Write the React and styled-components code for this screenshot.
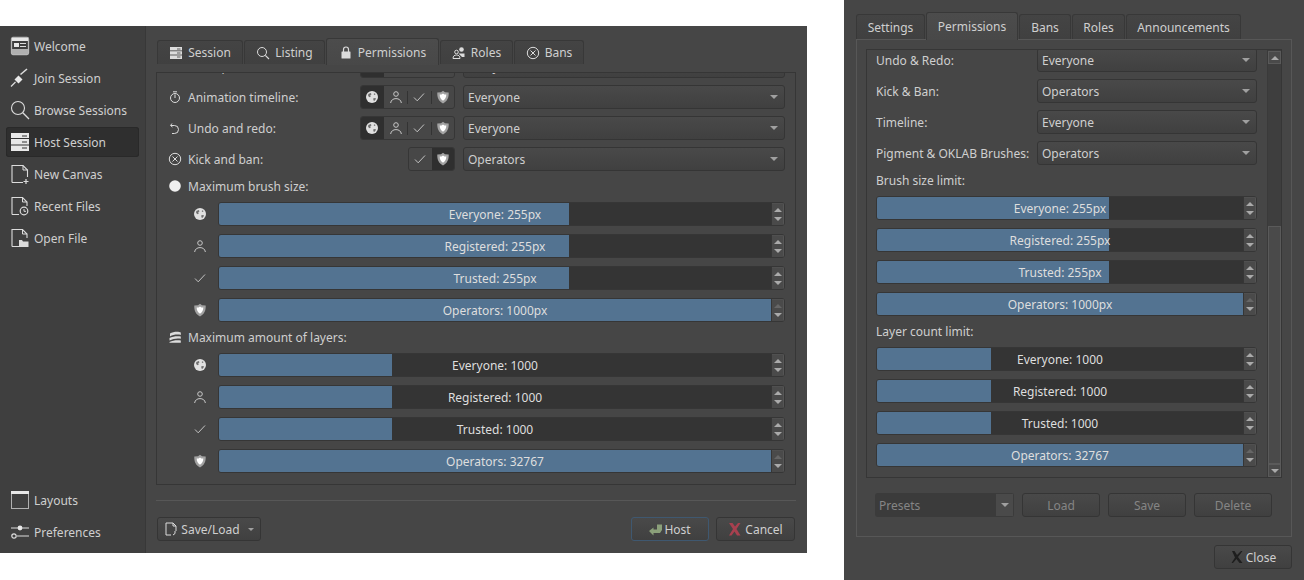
import React from "react";
import styled, { createGlobalStyle, css } from "styled-components";

const Global = createGlobalStyle`
  html, body { margin: 0; padding: 0; background: #fff; }
  #root { width: 1304px; height: 580px; overflow: hidden; }
  * { box-sizing: border-box; }
`;

const Page = styled.div`
  display: flex;
  width: 1304px;
  height: 580px;
  font-family: "Noto Sans", sans-serif;
  font-size: 12px;
  color: #cfcfcf;
  background: #fff;
`;
const LeftWindow = styled.div`
  display: flex;
  width: 807px;
  height: 527px;
  margin-top: 26px;
  background: #464646;
`;
const RightWindow = styled.div`
  display: flex;
  flex-direction: column;
  width: 460px;
  height: 580px;
  margin-left: 37px;
  padding: 12px 12px 0;
  background: #464646;
`;
const Sidebar = styled.nav`
  display: flex;
  flex-direction: column;
  gap: 2px;
  width: 146px;
  padding: 5px 6px 6px;
  background: #3f3f3f;
  border-right: 1px solid #383838;
`;
const Spacer = styled.div`
  flex: 1;
`;
const NavItem = styled.div`
  display: flex;
  align-items: center;
  gap: 4px;
  height: 30px;
  padding-left: 4px;
  border-radius: 3px;
  ${(p) =>
    p.$active &&
    css`
      background: #2f2f2f;
      box-shadow: inset 0 0 0 1px #292929;
    `}
`;
const NavIcon = styled.svg`
  width: 20px;
  height: 20px;
  flex: none;
`;
const Main = styled.main`
  display: flex;
  flex-direction: column;
  flex: 1;
  padding: 12px 11px 0 10px;
`;
const TabBar = styled.div`
  display: flex;
  align-items: flex-end;
  gap: 1px;
  height: ${(p) => p.$h}px;
  padding-left: ${(p) => p.$left}px;
  flex: none;
`;
const Tab = styled.div`
  display: flex;
  align-items: center;
  justify-content: center;
  gap: 5px;
  width: ${(p) => p.$w}px;
  height: ${(p) => (p.$active ? p.$h + 1 : p.$h - 2)}px;
  border: 1px solid #383838;
  border-bottom: 0;
  border-radius: 3px 3px 0 0;
  background: ${(p) =>
    p.$active ? "linear-gradient(#4c4c4c, #484848)" : "linear-gradient(#444444, #404040)"};
  position: relative;
  z-index: ${(p) => (p.$active ? 1 : 0)};
  margin-bottom: ${(p) => (p.$active ? -1 : 0)}px;
`;
const TabIcon = styled.svg`
  width: 14px;
  height: 14px;
  flex: none;
`;
const Pane = styled.section`
  display: flex;
  flex-direction: column;
  height: 421px;
  padding-top: 8px;
`;
const PaneBody = styled.div`
  flex: 1;
  overflow: hidden;
  border: 1px solid #363636;
  padding: 0 10px 0 11px;
`;
const Offset = styled.div`
  margin-top: -19px;
`;
const PermRow = styled.div`
  display: flex;
  align-items: center;
  height: 24px;
  margin-bottom: 7px;
`;
const RowIcon = styled.svg`
  width: 14px;
  height: 14px;
  margin-right: 6px;
  flex: none;
`;
const RowLabel = styled.span`
  flex: 1;
  white-space: nowrap;
`;
const Group = styled.div`
  display: flex;
  align-items: center;
  width: ${(p) => p.$w}px;
  height: 24px;
  margin-right: 8px;
  flex: none;
  border: 1px solid #363636;
  border-radius: 3px;
  background: #474747;
  overflow: hidden;
`;
const GroupBtn = styled.div`
  display: flex;
  align-items: center;
  justify-content: center;
  flex: 1;
  height: 22px;
  background: ${(p) => (p.$on ? "#2f2f2f" : "transparent")};
`;
const GroupSep = styled.i`
  width: 1px;
  height: 13px;
  flex: none;
  background: ${(p) => (p.$hide ? "transparent" : "#333")};
`;
const GroupIcon = styled.svg`
  width: 14px;
  height: 14px;
`;
const Combo = styled.div`
  display: flex;
  align-items: center;
  justify-content: space-between;
  width: ${(p) => p.$w}px;
  height: 24px;
  padding: 0 6px 0 4px;
  flex: none;
  border: 1px solid #353535;
  border-radius: 3px;
  background: linear-gradient(#494949, #404040);
`;
const Caret = styled.i`
  width: 0;
  height: 0;
  border-left: 4px solid transparent;
  border-right: 4px solid transparent;
  border-top: 4px solid #a0a0a0;
`;
const SmallCaret = styled(Caret)`
  margin-left: 5px;
  border-left-width: 3.5px;
  border-right-width: 3.5px;
  border-top-width: 3.5px;
`;
const Heading = styled.div`
  display: flex;
  align-items: center;
  height: 20px;
  margin: ${(p) => p.$m} 0 6px;
`;
const SliderRow = styled.div`
  display: flex;
  align-items: center;
  height: 24px;
  margin-bottom: 8px;
`;
const SliderIconBox = styled.div`
  display: flex;
  width: ${(p) => p.$w}px;
  padding-left: 25px;
  flex: none;
`;
const Slider = styled.div`
  display: flex;
  flex: 1;
  height: 24px;
  border: 1px solid #363636;
  border-radius: 3px;
  overflow: hidden;
`;
const Track = styled.div`
  position: relative;
  flex: 1;
  background: #343434;
`;
const Fill = styled.div`
  height: 100%;
  background: #537391;
`;
const Value = styled.span`
  position: absolute;
  inset: 0;
  display: flex;
  align-items: center;
  justify-content: center;
  color: #dedede;
`;
const Spin = styled.div`
  display: flex;
  flex-direction: column;
  align-items: center;
  justify-content: center;
  gap: 5px;
  width: 13px;
  flex: none;
  background: #4a4a4a;
  border-left: 1px solid #363636;
  box-shadow: inset -1px 0 0 #555, inset 0 1px 0 #505050;
`;
const Up = styled.i`
  width: 0;
  height: 0;
  border-left: 4px solid transparent;
  border-right: 4px solid transparent;
  border-bottom: 4px solid ${(p) => (p.$dim ? "#666666" : "#aaaaaa")};
`;
const Down = styled.i`
  width: 0;
  height: 0;
  border-left: 4px solid transparent;
  border-right: 4px solid transparent;
  border-top: 4px solid #aaaaaa;
`;
const Divider = styled.hr`
  width: 100%;
  height: 1px;
  margin: 15px 0 16px;
  border: 0;
  background: #575757;
`;
const Footer = styled.div`
  display: flex;
  align-items: center;
  gap: 7px;
  padding: 0 1px;
`;
const Button = styled.div`
  display: flex;
  align-items: center;
  justify-content: center;
  gap: ${(p) => p.$gap ?? 3}px;
  width: ${(p) => p.$w}px;
  height: 24px;
  flex: none;
  border: 1px solid ${(p) => (p.$focus ? "#3f5870" : "#353535")};
  border-radius: 3px;
  background: linear-gradient(#494949, #404040);
  color: ${(p) => (p.$off ? "#858585" : "inherit")};
`;
const RightPane = styled.section`
  height: 498px;
  padding: 9px 9px 0 9px;
  border: 1px solid #575757;
`;
const ScrollArea = styled.div`
  display: flex;
  height: 429px;
  border: 1px solid #363636;
`;
const RightBody = styled.div`
  flex: 1;
  overflow: hidden;
  padding: 0 10px 0 9px;
`;
const RightOffset = styled.div`
  margin-top: -2px;
`;
const Scrollbar = styled.div`
  display: flex;
  flex-direction: column;
  width: 14px;
  padding-top: 1px;
  flex: none;
  background: #3e3e3e;
  border-left: 1px solid #3a3a3a;
`;
const ScrollBtn = styled.div`
  display: flex;
  align-items: center;
  justify-content: center;
  height: 13px;
  background: #4a4a4a;
  border: 1px solid #5a5a5a;
`;
const Thumb = styled.div`
  flex: 1;
  margin-top: 162px;
  background: #4a4a4a;
  border: 1px solid #5a5a5a;
`;
const RRow = styled.div`
  display: flex;
  align-items: center;
  height: 24px;
  margin-bottom: 7px;
`;
const RLabel = styled.span`
  width: 161px;
  flex: none;
  white-space: nowrap;
`;
const Presets = styled.div`
  display: flex;
  align-items: center;
  gap: 8px;
  margin-top: 15px;
  padding-left: 9px;
`;
const PresetBox = styled.div`
  display: flex;
  align-items: center;
  justify-content: space-between;
  width: 139px;
  height: 24px;
  border-radius: 3px;
  overflow: hidden;
  color: #858585;
  background: #3b3b3b;
  padding-left: 4px;
`;
const PresetArrow = styled.div`
  display: flex;
  align-items: center;
  justify-content: center;
  width: 19px;
  height: 100%;
  background: #4a4a4a;
  border: 1px solid #3b3b3b;
`;
const CloseRow = styled.div`
  display: flex;
  justify-content: flex-end;
  margin-top: 8px;
`;

const c = "#dcdcdc";
const Globe = () => (
  <>
    <circle cx="7" cy="7" r="6" fill="#e0e0e0" />
    <path d="M3.300 4l2.400-1 .8 1.200-1.300 1.300.6 1-1.200.8-1.500-1.300zM8.300 8.300l2.200-.4.400 1.100-1.600 2-.9-.8zM9 3.200l1.600.7-.8 1.200-1-.7z" fill="#6e6e6e" />
  </>
);
const Person = () => (
  <>
    <circle cx="7" cy="4" r="2.300" fill="none" stroke="#c8c8c8" strokeWidth="1" />
    <path d="M1.600 13c.5-3 2.600-4.400 5.400-4.400s4.900 1.400 5.400 4.400" fill="none" stroke="#c8c8c8" strokeWidth="1" />
  </>
);
const Check = () => <path d="M2 7.500l3.200 3.300L12 3.500" fill="none" stroke="#c4c4c4" strokeWidth="1" />;
const Shield = () => (
  <>
    <path d="M7 .8l2 1.400 3.700.2c.3 5.100-1.500 8.800-5.700 11C2.800 11.200 1 7.500 1.300 2.400L5 2.200z" fill="#a2a2a2" />
    <path d="M7 3.600l1.400.9 1.900.1c0 2.700-.9 4.600-3.300 6.100-2.400-1.500-3.300-3.400-3.300-6.100l1.900-.1z" fill="#fff" />
  </>
);
const levels = { g: Globe, p: Person, c: Check, s: Shield };

const PermIcon = ({ k }) => {
  const I = levels[k];
  return (
    <GroupIcon viewBox="0 0 14 14">
      <I />
    </GroupIcon>
  );
};

const sline = { fill: "none", stroke: c, strokeWidth: 1 };

const NavGlyphs = {
  welcome: (
    <>
      <rect x="1.500" y="1.500" width="17" height="17" rx="1.500" {...sline} strokeWidth="1.300" stroke="#b8b8b8" />
      <rect x="2" y="2" width="16" height="3" fill="#e8e8e8" />
      <rect x="4" y="7" width="5" height="4" fill="#e8e8e8" />
      <path d="M10 7.500h6M10 10.500h6" {...sline} />
      <rect x="2" y="13" width="16" height="5" fill="#b0b0b0" />
    </>
  ),
  join: (
    <>
      <path d="M1 18.500l4.500-4.500" {...sline} strokeWidth="1.200" />
      <path d="M4.500 11.500l4-4 4 4-4 4z" fill="#e8e8e8" />
      <path d="M10.500 6.500L17 1" {...sline} strokeWidth="1.600" />
    </>
  ),
  browse: (
    <>
      <circle cx="8" cy="8" r="6.500" {...sline} strokeWidth="1.100" />
      <path d="M12.800 12.800L19 19" {...sline} strokeWidth="1.300" />
    </>
  ),
  host: (
    <>
      <rect x="1" y="1" width="18" height="18" fill="#e8e8e8" />
      <path d="M1 6.500h18M1 13h18M12 4h5M12 10h5M12 16h5" stroke="#333" strokeWidth="1" />
    </>
  ),
  canvas: (
    <>
      <path d="M2 18.500V1.500h11l4.500 4.500v7M2 18.500h11" {...sline} strokeWidth="1.100" />
      <path d="M13 1.500V6h4.500" {...sline} />
      <path d="M16 15v5M13.500 17.500h5" {...sline} strokeWidth="1.200" />
    </>
  ),
  recent: (
    <>
      <path d="M2 18.500V1.500h10.500L17 6v4M2 18.500h7" {...sline} strokeWidth="1.100" />
      <path d="M12.500 1.500V6H17" {...sline} />
      <circle cx="14" cy="15" r="3.800" {...sline} strokeWidth="1.200" />
      <path d="M14 13v2.300h2" {...sline} />
    </>
  ),
  open: (
    <>
      <path d="M2 18.500V1.500h10.500L17 6v4M2 18.500h7" {...sline} strokeWidth="1.100" />
      <path d="M12.500 1.500V6H17" {...sline} />
      <path d="M9 12h3l1 1.500h5.500V19H9z" fill={c} />
    </>
  ),
  layouts: (
    <>
      <rect x="1.500" y="1.500" width="17" height="17" fill="none" stroke="#b0b0b0" strokeWidth="1" />
      <rect x="1" y="1" width="18" height="3" fill="#e8e8e8" />
    </>
  ),
  prefs: (
    <>
      <path d="M1 6h18M7 14h12" {...sline} />
      <circle cx="10" cy="6" r="2.400" fill="#e8e8e8" />
      <circle cx="4" cy="14" r="2.200" {...sline} strokeWidth="1.200" />
    </>
  ),
};

const tabGlyphs = {
  session: (
    <>
      <rect x="1" y="1" width="12" height="12" fill={c} />
      <path d="M1 4.800h12M1 9h12M8 3h3.500M8 7h3.500M8 11h3.500" stroke="#3d3d3d" strokeWidth="0.800" />
    </>
  ),
  listing: (
    <>
      <circle cx="6" cy="6" r="4.500" {...sline} />
      <path d="M9.300 9.300L13 13" {...sline} strokeWidth="1.100" />
    </>
  ),
  lock: (
    <>
      <path d="M4.500 7V4.500a2.500 2.500 0 0 1 5 0V7" {...sline} strokeWidth="1.200" />
      <rect x="2.500" y="6.500" width="9" height="7" rx="0.500" fill={c} />
    </>
  ),
  roles: (
    <>
      <circle cx="9.500" cy="3.500" r="2.300" fill={c} />
      <path d="M6.500 7.500h6v3.500h-2.500" fill={c} />
      <circle cx="4.500" cy="6" r="1.800" {...sline} />
      <path d="M1 12.500c0-2.500 1.500-3.500 3.500-3.500s3.500 1 3.500 3.500z" {...sline} />
    </>
  ),
  bans: (
    <>
      <circle cx="7" cy="7" r="5.700" {...sline} />
      <path d="M4.500 4.500l5 5M9.500 4.500l-5 5" {...sline} />
    </>
  ),
};

const rowGlyphs = {
  laser: null,
  timer: (
    <>
      <circle cx="7" cy="8" r="4.500" {...sline} />
      <path d="M5 1.800h4M7 4.500V8" {...sline} />
    </>
  ),
  undo: (
    <>
      <path d="M4 2.500L2.500 4.500l2 1.500" {...sline} />
      <path d="M3 4.500h3.500a4 4 0 0 1 0 8H4" {...sline} />
    </>
  ),
  ban: tabGlyphs.bans,
  dot: <circle cx="7" cy="7" r="5.800" fill="#f0f0f0" />,
  layers: (
    <>
      <path d="M2 3.500C5 1.500 11 1.500 12.800 2.500V5C10 4 5 4.500 2 6.500z" fill={c} />
      <path d="M1.500 8C5 6 10 6 12.800 6.500v2.300C10 8 5 8.500 1.500 10.500z" fill={c} />
      <path d="M1.500 12C5 10 10 10 12.800 10.500v2.300H1.500z" fill={c} />
    </>
  ),
};

const navTop = [
  ["welcome", "Welcome"],
  ["join", "Join Session"],
  ["browse", "Browse Sessions"],
  ["host", "Host Session", true],
  ["canvas", "New Canvas"],
  ["recent", "Recent Files"],
  ["open", "Open File"],
];
const navBottom = [
  ["layouts", "Layouts"],
  ["prefs", "Preferences"],
];

const Nav = ({ icon, label, active }) => (
  <NavItem $active={active}>
    <NavIcon viewBox="0 0 20 20">{NavGlyphs[icon]}</NavIcon>
    {label}
  </NavItem>
);

const RangeSlider = ({ label, pct, full, iconKey }) => (
  <SliderRow>
    {iconKey && (
      <SliderIconBox $w={50}>
        <PermIcon k={iconKey} />
      </SliderIconBox>
    )}
    <Slider>
      <Track>
        <Fill style={{ width: `${pct}%` }} />
        <Value>{label}</Value>
      </Track>
      <Spin>
        <Up $dim={full} />
        <Down />
      </Spin>
    </Slider>
  </SliderRow>
);

const perms = [
  ["laser", "Laser pointer:", ["g", "p", "c", "s"], "g", "Everyone"],
  ["timer", "Animation timeline:", ["g", "p", "c", "s"], "g", "Everyone"],
  ["undo", "Undo and redo:", ["g", "p", "c", "s"], "g", "Everyone"],
  ["ban", "Kick and ban:", ["c", "s"], "s", "Operators"],
];

const brush = [
  ["g", "Everyone: 255px", 63.4],
  ["p", "Registered: 255px", 63.4],
  ["c", "Trusted: 255px", 63.4],
  ["s", "Operators: 1000px", 100, true],
];
const layers = [
  ["g", "Everyone: 1000", 31.3],
  ["p", "Registered: 1000", 31.3],
  ["c", "Trusted: 1000", 31.3],
  ["s", "Operators: 32767", 100, true],
];

const rightCombos = [
  ["Undo & Redo:", "Everyone"],
  ["Kick & Ban:", "Operators"],
  ["Timeline:", "Everyone"],
  ["Pigment & OKLAB Brushes:", "Operators"],
];
const rBrush = [
  ["Everyone: 255px", 63.4],
  ["Registered: 255px", 63.4],
  ["Trusted: 255px", 63.4],
  ["Operators: 1000px", 100, true],
];
const rLayers = [
  ["Everyone: 1000", 31.2],
  ["Registered: 1000", 31.2],
  ["Trusted: 1000", 31.2],
  ["Operators: 32767", 100, true],
];

const HostGlyph = () => (
  <TabIcon viewBox="0 0 14 14">
    <path d="M0 9l4.500-3.500v2h3.500V2.500h5V8l-2 3H4.500v2.500z" fill="#8ba07a" />
  </TabIcon>
);
const CancelGlyph = () => (
  <TabIcon viewBox="0 0 14 14">
    <path d="M1 1h3.500l2.500 3.500L10 1h2.500L8.500 7l4 6.500H9L6.500 9.500 3.500 13.500H1l4-6.500z" fill="#a8404f" />
  </TabIcon>
);
const CloseGlyph = () => (
  <TabIcon viewBox="0 0 14 14">
    <path d="M2 1h2.500l2.500 4L11 1h1.500L8 7l4.500 6h-3L6.500 9 3 13H1.500L5 7.500z" fill="#1e1e1e" />
  </TabIcon>
);
const SaveGlyph = () => (
  <TabIcon viewBox="0 0 14 14">
    <path d="M2 13V1h7l3 3v5M2 13h5M9 1v3h3" {...sline} />
    <path d="M9 13l2-1.500V9" {...sline} />
  </TabIcon>
);

const PermGroup = ({ btns, on }) => (
  <Group $w={btns.length === 4 ? 95 : 47}>
    {btns.map((b, i) => (
      <React.Fragment key={b}>
        {i > 0 && <GroupSep $hide={b === on || btns[i - 1] === on} />}
        <GroupBtn $on={b === on}>
          <PermIcon k={b} />
        </GroupBtn>
      </React.Fragment>
    ))}
  </Group>
);

export default function App() {
  return (
    <Page>
      <Global />
      <LeftWindow>
        <Sidebar>
          {navTop.map(([i, l, a]) => (
            <Nav key={l} icon={i} label={l} active={a} />
          ))}
          <Spacer />
          {navBottom.map(([i, l]) => (
            <Nav key={l} icon={i} label={l} />
          ))}
        </Sidebar>
        <Main>
          <TabBar $h={26} $left={1}>
            <Tab $h={26} $w={86}>
              <TabIcon viewBox="0 0 14 14">{tabGlyphs.session}</TabIcon>Session
            </Tab>
            <Tab $h={26} $w={81}>
              <TabIcon viewBox="0 0 14 14">{tabGlyphs.listing}</TabIcon>Listing
            </Tab>
            <Tab $h={26} $w={113} $active>
              <TabIcon viewBox="0 0 14 14">{tabGlyphs.lock}</TabIcon>Permissions
            </Tab>
            <Tab $h={26} $w={73}>
              <TabIcon viewBox="0 0 14 14">{tabGlyphs.roles}</TabIcon>Roles
            </Tab>
            <Tab $h={26} $w={70}>
              <TabIcon viewBox="0 0 14 14">{tabGlyphs.bans}</TabIcon>Bans
            </Tab>
          </TabBar>
          <Pane>
            <PaneBody>
              <Offset>
                {perms.map(([ic, label, btns, on, val]) => (
                  <PermRow key={label}>
                    <RowIcon viewBox="0 0 14 14">{rowGlyphs[ic]}</RowIcon>
                    <RowLabel>{label}</RowLabel>
                    <PermGroup btns={btns} on={on} />
                    <Combo $w={322}>
                      {val}
                      <Caret />
                    </Combo>
                  </PermRow>
                ))}
                <Heading $m="-2px">
                  <RowIcon viewBox="0 0 14 14">{rowGlyphs.dot}</RowIcon>
                  Maximum brush size:
                </Heading>
                {brush.map(([k, l, p, f]) => (
                  <RangeSlider key={l} label={l} pct={p} full={f} iconKey={k} />
                ))}
                <Heading $m="-3px">
                  <RowIcon viewBox="0 0 14 14">{rowGlyphs.layers}</RowIcon>
                  Maximum amount of layers:
                </Heading>
                {layers.map(([k, l, p, f]) => (
                  <RangeSlider key={l} label={l} pct={p} full={f} iconKey={k} />
                ))}
              </Offset>
            </PaneBody>
          </Pane>
          <Divider />
          <Footer>
            <Button $w={104}>
              <SaveGlyph />
              Save/Load
              <SmallCaret />
            </Button>
            <Spacer />
            <Button $w={78} $focus $gap={1}>
              <HostGlyph />
              Host
            </Button>
            <Button $w={79}>
              <CancelGlyph />
              Cancel
            </Button>
          </Footer>
        </Main>
      </LeftWindow>
      <RightWindow>
        <TabBar $h={27} $left={0}>
          <Tab $h={27} $w={69}>Settings</Tab>
          <Tab $h={27} $w={92} $active>
            Permissions
          </Tab>
          <Tab $h={27} $w={52}>Bans</Tab>
          <Tab $h={27} $w={53}>Roles</Tab>
          <Tab $h={27} $w={115}>Announcements</Tab>
        </TabBar>
        <RightPane>
          <ScrollArea>
            <RightBody>
              <RightOffset>
                {rightCombos.map(([l, v]) => (
                  <RRow key={l}>
                    <RLabel>{l}</RLabel>
                    <Combo $w={220}>
                      {v}
                      <Caret />
                    </Combo>
                  </RRow>
                ))}
                <Heading $m="-2px">Brush size limit:</Heading>
                {rBrush.map(([l, p, f]) => (
                  <RangeSlider key={l} label={l} pct={p} full={f} />
                ))}
                <Heading $m="-3px">Layer count limit:</Heading>
                {rLayers.map(([l, p, f]) => (
                  <RangeSlider key={l} label={l} pct={p} full={f} />
                ))}
              </RightOffset>
            </RightBody>
            <Scrollbar>
              <ScrollBtn>
                <Up />
              </ScrollBtn>
              <Thumb />
              <ScrollBtn>
                <Down />
              </ScrollBtn>
            </Scrollbar>
          </ScrollArea>
          <Presets>
            <PresetBox>
              Presets
              <PresetArrow>
                <Caret />
              </PresetArrow>
            </PresetBox>
            <Button $w={78} $off>
              Load
            </Button>
            <Button $w={78} $off>
              Save
            </Button>
            <Button $w={78} $off>
              Delete
            </Button>
          </Presets>
        </RightPane>
        <CloseRow>
          <Button $w={78} $gap={2}>
            <CloseGlyph />
            Close
          </Button>
        </CloseRow>
      </RightWindow>
    </Page>
  );
}
